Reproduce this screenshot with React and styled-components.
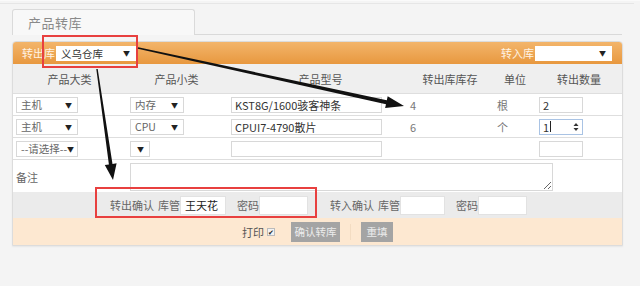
import React from "react";
import styled, { createGlobalStyle } from "styled-components";

const Global = createGlobalStyle`
  html, body { margin: 0; padding: 0; background: #f4f4f4; }
  body { font-family: "Noto Sans CJK SC", "Liberation Sans", sans-serif; font-size: 11px; color: #555; }
  * { box-sizing: border-box; }
`;

const Page = styled.div`
  position: relative;
  width: 640px;
  height: 286px;
  overflow: hidden;
  padding: 0 18px 0 12px;
  border-top: 1px solid #fafafa;
`;

const TopRule = styled.div`
  height: 1px;
  margin: 2px -12px 0;
  background: #e6e6e6;
`;

const TabStrip = styled.div`
  margin-top: 5px;
  border-bottom: 1px solid #d9d9d9;
  height: 26px;
`;

const Tab = styled.div`
  width: 183px;
  height: 26px;
  border: 1px solid #dadada;
  border-bottom: none;
  border-radius: 3px 3px 0 0;
  background: #f8f8f8;
  padding-left: 15px;
  display: flex;
  align-items: center;
  font-size: 13px;
  color: #8a8a8a;
  letter-spacing: 0.5px;
`;

const Panel = styled.div`
  margin-top: 6px;
  width: 611px;
  border: 1px solid #dcdcdc;
  border-radius: 4px 4px 0 0;
  background: #fff;
  box-shadow: 0 1px 2px rgba(0,0,0,0.06);
`;

const OrangeBar = styled.div`
  height: 22px;
  background: linear-gradient(#f3b56b, #e8983f);
  border-radius: 3px 3px 0 0;
  display: flex;
  align-items: center;
  justify-content: space-between;
  padding: 0 10px 0 9px;
  color: #fff;
`;

const BarGroup = styled.div`
  display: flex;
  align-items: center;
  gap: 1px;
`;

const BarLabel = styled.span`
  font-size: 11px;
  color: #fff3e4;
`;

const FakeSelect = styled.div`
  width: ${p => p.$w}px;
  height: ${p => p.$h || 15}px;
  background: #fff;
  border: 1px solid ${p => (p.$plain ? "#fff" : "#d8d8d8")};
  display: flex;
  align-items: center;
  justify-content: space-between;
  padding: 0 5px 0 4px;
  font-size: 10.5px;
  color: ${p => (p.$dark ? "#333" : "#666")};
  white-space: nowrap;
`;

const Caret = styled.span`
  font-size: 7px;
  color: #222;
  margin-left: auto;
`;

const Grid = styled.div`
  display: grid;
  grid-template-columns: 113px 101px 179px 88px 42px 86px;
`;

const HeadCell = styled.div`
  height: 29px;
  background: #efefef;
  display: flex;
  align-items: center;
  justify-content: center;
  padding-left: ${p => p.$shift || 0}px;
  color: #555;
  font-size: 11px;
`;

const Cell = styled.div`
  height: 22px;
  border-top: 1px solid #dedede;
  display: flex;
  align-items: center;
  padding-left: ${p => p.$pl ?? 3}px;
  color: #777;
  font-size: 11px;
`;

const TextBox = styled.input`
  width: ${p => p.$w}px;
  height: 16px;
  border: 1px solid #d8d8d8;
  background: #fff;
  padding: 0 3px;
  font: inherit;
  font-size: 11px;
  color: #333;
  outline: none;
`;

const SpinBox = styled.div`
  width: 44px;
  height: 16px;
  border: 1px solid #a9c3e4;
  background: #fff;
  display: flex;
  align-items: center;
  padding: 0 3px;
  font-size: 11px;
  color: #333;
`;

const TextCaret = styled.span`
  display: inline-block;
  width: 1px;
  height: 11px;
  background: #222;
  margin-left: 1px;
`;

const Spinner = styled.svg`
  margin-left: auto;
  display: block;
`;

const RemarkRow = styled.div`
  display: grid;
  grid-template-columns: 113px 1fr;
  height: 33px;
  border-top: 1px solid #dedede;
`;

const RemarkLabel = styled.div`
  display: flex;
  align-items: center;
  padding-left: 3px;
  color: #666;
  font-size: 11px;
`;

const RemarkArea = styled.textarea`
  width: 423px;
  height: 28px;
  margin: 3px 0 0 4px;
  border: 1px solid #d8d8d8;
  resize: both;
  font: inherit;
  outline: none;
`;

const ConfirmRow = styled.div`
  height: 26px;
  background: #ebebeb;
  display: flex;
  align-items: center;
  padding-left: 97px;
  color: #666;
  font-size: 11px;
`;

const Label = styled.span`
  margin-left: ${p => p.$ml || 0}px;
  white-space: nowrap;
`;

const ConfirmInput = styled.div`
  width: ${p => p.$w}px;
  height: 19px;
  background: #fff;
  border: 1px solid #e2e2e2;
  display: flex;
  align-items: center;
  padding-left: 4px;
  color: #222;
  font-size: 11px;
`;

const Footer = styled.div`
  height: 27px;
  background: #fde8d1;
  display: flex;
  align-items: center;
  padding-left: 229px;
  color: #555;
  font-size: 11px;
`;

const Check = styled.span`
  width: 8px;
  height: 8px;
  margin-left: 3px;
  border: 1px solid #bbb;
  background: #f2f2f2;
  font-size: 7px;
  line-height: 6px;
  color: #222;
  display: flex;
  align-items: center;
  justify-content: center;
`;

const Button = styled.div`
  width: ${p => p.$w}px;
  height: 20px;
  margin-left: ${p => p.$ml}px;
  background: #a4a4a4;
  color: #ececec;
  font-size: 10.5px;
  display: flex;
  align-items: center;
  justify-content: center;
`;

const Divider = styled.span`
  width: 1px;
  height: 16px;
  margin-left: 10px;
  background: #f3dcc2;
`;

const Overlay = styled.svg`
  position: absolute;
  left: 0;
  top: 0;
  pointer-events: none;
`;

const headers = [
  { t: "产品大类" },
  { t: "产品小类" },
  { t: "产品型号", shift: 8 },
  { t: "转出库库存" },
  { t: "单位" },
  { t: "转出数量" },
];

const rows = [
  { big: "主机", small: "内存", sw: 54, model: "KST8G/1600骇客神条", stock: "4", unit: "根", qty: "2" },
  { big: "主机", small: "CPU", sw: 54, model: "CPUI7-4790散片", stock: "6", unit: "个", qty: "1", focus: true },
  { big: "--请选择--", small: "", sw: 20, model: "", stock: "", unit: "", qty: "" },
];

export default function App() {
  return (
    <>
      <Global />
      <Page>
        <TopRule />
        <TabStrip>
          <Tab>产品转库</Tab>
        </TabStrip>
        <Panel>
          <OrangeBar>
            <BarGroup>
              <BarLabel>转出库</BarLabel>
              <FakeSelect $w={80} $plain $dark>义乌仓库<Caret>▼</Caret></FakeSelect>
            </BarGroup>
            <BarGroup>
              <BarLabel>转入库</BarLabel>
              <FakeSelect $w={77} $plain><Caret>▼</Caret></FakeSelect>
            </BarGroup>
          </OrangeBar>
          <Grid>
            {headers.map(h => (
              <HeadCell key={h.t} $shift={h.shift}>{h.t}</HeadCell>
            ))}
            {rows.map((r, i) => (
              <React.Fragment key={i}>
                <Cell><FakeSelect $w={62} $h={16}>{r.big}<Caret>▼</Caret></FakeSelect></Cell>
                <Cell $pl={4}><FakeSelect $w={r.sw} $h={16}>{r.small}<Caret>▼</Caret></FakeSelect></Cell>
                <Cell $pl={4}><TextBox $w={151} readOnly value={r.model} /></Cell>
                <Cell $pl={4}>{r.stock}</Cell>
                <Cell $pl={3}>{r.unit}</Cell>
                <Cell $pl={3}>
                  {r.focus ? (
                    <SpinBox>
                      {r.qty}
                      <TextCaret />
                      <Spinner width="6" height="10" viewBox="0 0 6 10">
                        <polygon points="3,1 5.5,4 0.5,4" fill="#333" />
                        <polygon points="0.5,6 5.5,6 3,9" fill="#333" />
                      </Spinner>
                    </SpinBox>
                  ) : (
                    <TextBox $w={44} readOnly value={r.qty} />
                  )}
                </Cell>
              </React.Fragment>
            ))}
          </Grid>
          <RemarkRow>
            <RemarkLabel>备注</RemarkLabel>
            <div><RemarkArea readOnly /></div>
          </RemarkRow>
          <ConfirmRow>
            <Label>转出确认</Label>
            <Label $ml={4}>库管</Label>
            <ConfirmInput $w={46}>王天花</ConfirmInput>
            <Label $ml={11}>密码</Label>
            <ConfirmInput $w={49} />
            <Label $ml={22}>转入确认</Label>
            <Label $ml={4}>库管</Label>
            <ConfirmInput $w={45} />
            <Label $ml={11}>密码</Label>
            <ConfirmInput $w={49} />
          </ConfirmRow>
          <Footer>
            <span>打印</span>
            <Check>✔</Check>
            <Button $w={49} $ml={16}>确认转库</Button>
            <Divider />
            <Button $w={32} $ml={10}>重填</Button>
          </Footer>
        </Panel>
        <Overlay width="640" height="286" viewBox="0 0 640 286">
          <rect x="43" y="35" width="94" height="31" fill="none" stroke="#e8403f" strokeWidth="2" />
          <rect x="96" y="187" width="220" height="29" fill="none" stroke="#e8403f" strokeWidth="2" />
          <polygon
            fill="#111"
            points="137.8,47.8 138.2,46.2 386.8,99.2 387.7,95.3 404,105 385.1,107.1 386,103.2"
          />
          <polygon
            fill="#111"
            points="96.3,68.1 97.7,67.9 112.5,162.9 116.6,162.3 113,179 104.8,164.1 108.9,163.5"
          />
        </Overlay>
      </Page>
    </>
  );
}
